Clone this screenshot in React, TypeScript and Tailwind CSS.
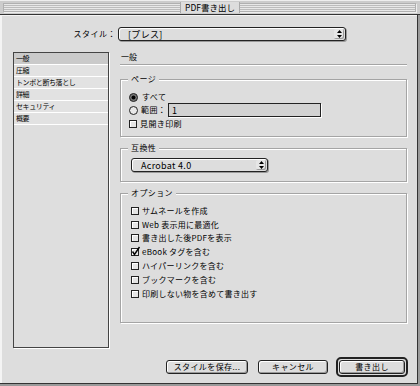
import React from 'react';

const jp = "font-['Noto_Sans_CJK_JP','Liberation_Sans',sans-serif]";

const sections = ['一般', '圧縮', 'トンボと断ち落とし', '詳細', 'セキュリティ', '概要'];

const options = [
  { label: 'サムネールを作成', checked: false },
  { label: 'Web 表示用に最適化', checked: false },
  { label: '書き出した後PDFを表示', checked: false },
  { label: 'eBook タグを含む', checked: true },
  { label: 'ハイパーリンクを含む', checked: false },
  { label: 'ブックマークを含む', checked: false },
  { label: '印刷しない物を含めて書き出す', checked: false },
];

function Arrows() {
  return (
    <svg width="5" height="8" viewBox="0 0 5 8" className="fill-black">
      <path d="M2.5 0 L5 3 L0 3Z M0 5 L5 5 L2.5 8Z" />
    </svg>
  );
}

function Popup({ label, width }: { label: string; width: string }) {
  return (
    <div
      className={`flex h-[14px] ${width} items-stretch rounded-[3px] border border-[#222] bg-[#dddddd] shadow-[inset_1px_1px_0_#fff,1px_1px_0_#999]`}
    >
      <div className="flex flex-1 items-center pl-[9px] pt-[1px] text-[9px] leading-none tracking-[0.3px]">{label}</div>
      <div className="m-[1px] flex w-[10px] items-center justify-center rounded-[2px] bg-[#e6e6e6] shadow-[inset_-1px_-1px_0_#999]">
        <Arrows />
      </div>
    </div>
  );
}

function Checkbox({ checked }: { checked: boolean }) {
  return (
    <div className="relative h-[8px] w-[8px] shrink-0 border border-[#222] bg-[#e4e4e4] shadow-[inset_1px_1px_0_#fff]">
      {checked && (
        <svg width="10" height="10" viewBox="0 0 10 10" className="absolute -left-[1px] -top-[3px]">
          <path d="M1.5 5.5 L3.5 8.5 L8.5 1" stroke="#000" strokeWidth="1.4" fill="none" />
        </svg>
      )}
    </div>
  );
}

function Radio({ on }: { on: boolean }) {
  return (
    <svg width="9" height="9" viewBox="0 0 9 9" className="shrink-0">
      <circle cx="4.5" cy="4.5" r="4" fill={on ? '#777' : '#e8e8e8'} stroke="#222" strokeWidth="1" />
      {on && <circle cx="4.5" cy="4.5" r="2" fill="#000" />}
    </svg>
  );
}

function Group({ title, className, children }: { title: string; className: string; children: React.ReactNode }) {
  return (
    <div className={`relative border border-[#a4a4a4] shadow-[inset_1px_1px_0_#fff,1px_1px_0_#fff] ${className}`}>
      <span className="absolute -top-[6px] left-[7px] bg-[#dddddd] px-[3px] text-[8px] leading-[10px] tracking-[0.4px]">
        {title}
      </span>
      {children}
    </div>
  );
}

function Button({ label, width }: { label: string; width: string }) {
  return (
    <div
      className={`flex h-[14px] ${width} items-center justify-center rounded-[3px] border border-[#222] bg-[#dddddd] text-[8px] leading-none tracking-[0.4px] shadow-[inset_1px_1px_0_#fff,inset_-1px_-1px_0_#999]`}
    >
      {label}
    </div>
  );
}

export default function App() {
  return (
    <div className={`flex h-[386px] w-[420px] flex-col bg-[#9a9a9a] text-black ${jp}`}>
      {/* title bar */}
      <div className="relative flex h-[15px] items-center border-b border-[#333] bg-[#cccccc] pl-[3px] pr-[4px] shadow-[inset_0_1px_0_#eee]">
        <div className="h-[9px] flex-1 border border-[#b0b0b0] bg-[repeating-linear-gradient(#e8e8e8_0px,#e8e8e8_1px,#bcbcbc_1px,#bcbcbc_2px)] shadow-[1px_1px_0_#eee]" />
        <div className="absolute left-[180px] top-[2px] flex h-[11px] items-center border-x border-[#aaa] bg-[#dddddd] px-[4px] text-[8.5px] leading-none">
          PDF書き出し
        </div>
      </div>

      {/* body */}
      <div className="mb-[2px] mr-[2px] flex flex-1 flex-col border-b border-r border-[#333] bg-[#dddddd] pl-[2px] shadow-[inset_2px_1px_0_#f4f4f4]">
        <div className="mt-[12px] flex items-center">
          <div className="w-[116px] pr-[2px] text-right text-[8px] leading-none tracking-[0.5px]">スタイル：</div>
          <Popup label="[プレス]" width="w-[228px]" />
        </div>

        <div className="mt-[11px] flex gap-[11px] pl-[11px]">
          {/* section list */}
          <div className="flex h-[296px] w-[96px] flex-col border border-[#444] bg-[#dedede] shadow-[1px_1px_0_#fff]">
            {sections.map((s, i) => (
              <div
                key={s}
                className={`flex h-[12px] items-center border-b border-white pl-[2px] text-[7px] leading-none tracking-[-0.4px] ${
                  i === 0 ? 'bg-[#cacaca]' : 'bg-[#e2e2e2]'
                }`}
              >
                {s}
              </div>
            ))}
          </div>

          {/* general panel */}
          <div className="flex w-[287px] flex-col">
            <div className="flex h-[13px] items-start border-b border-[#a4a4a4] pl-[1px] text-[8px] leading-[10px] shadow-[0_1px_0_#fff]">
              一般
            </div>

            <Group title="ページ" className="mt-[14px] h-[58px] pl-[8px] pt-[11px]">
              <div className="flex h-[12px] items-center gap-[4px] text-[8px] leading-none tracking-[0.4px]">
                <Radio on />
                <span>すべて</span>
              </div>
              <div className="flex h-[14px] items-center text-[8px] leading-none tracking-[0.4px]">
                <Radio on={false} />
                <span className="ml-[3px] w-[27px]">範囲：</span>
                <div className="flex h-[14px] w-[153px] items-center border border-[#222] bg-[#d2d2d2] pl-[3px] text-[9px] shadow-[1px_1px_0_#fff]">
                  1
                </div>
              </div>
              <div className="flex h-[14px] items-center gap-[3px] text-[8px] leading-none tracking-[0.4px]">
                <Checkbox checked={false} />
                <span>見開き印刷</span>
              </div>
            </Group>

            <Group title="互換性" className="mt-[11px] h-[34px] pl-[10px] pt-[9px]">
              <Popup label="Acrobat 4.0" width="w-[137px]" />
            </Group>

            <Group title="オプション" className="mt-[11px] h-[130px] pl-[10px] pt-[10px]">
              {options.map((o) => (
                <div key={o.label} className="flex h-[13.8px] items-center gap-[3px] text-[8px] leading-none tracking-[0.25px]">
                  <Checkbox checked={o.checked} />
                  <span>{o.label}</span>
                </div>
              ))}
            </Group>
          </div>
        </div>

        {/* buttons */}
        <div className="mt-[9px] flex items-center justify-end pr-[9px]">
          <Button label="スタイルを保存..." width="w-[82px]" />
          <div className="ml-[10px]">
            <Button label="キャンセル" width="w-[70px]" />
          </div>
          <div className="ml-[8px] rounded-[5px] border-2 border-[#222] p-[1px]">
            <Button label="書き出し" width="w-[66px]" />
          </div>
        </div>
      </div>
    </div>
  );
}
